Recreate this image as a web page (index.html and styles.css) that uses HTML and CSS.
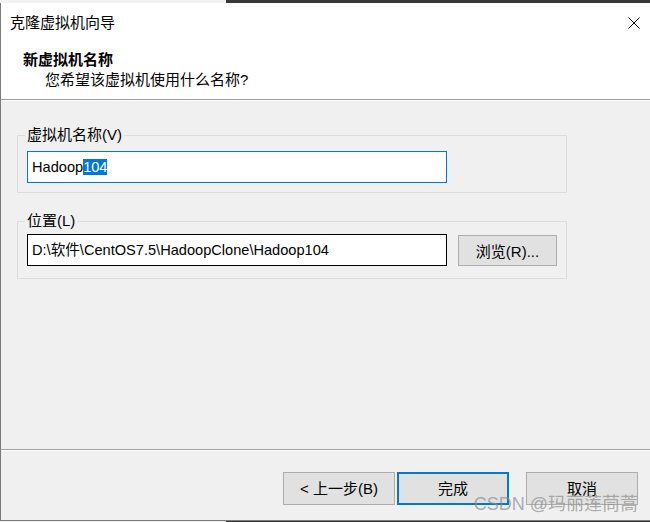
FILE: index.html
```html
<!DOCTYPE html>
<html>
<head>
    <meta charset="UTF-8">
    <title>克隆虚拟机向导</title>
    <link rel="stylesheet" href="styles.css">
</head>
<body>
<div class="strip">
    <div class="strip-light"></div>
    <div class="strip-dark"></div>
</div>

<div class="window">
    <div class="head">
        <div class="titlebar">
            <span class="title">克隆虚拟机向导</span>
            <svg class="close" width="12" height="12" viewBox="0 0 12 12">
                <path d="M0.5 0.5 L11.5 11.5 M11.5 0.5 L0.5 11.5" stroke="#000" stroke-width="1" fill="none"/>
            </svg>
        </div>
        <div class="page-title">新虚拟机名称</div>
        <div class="page-sub">您希望该虚拟机使用什么名称?</div>
    </div>

    <div class="content">
        <fieldset class="group group-name">
            <legend>虚拟机名称(V)</legend>
            <div class="field focused"><span>Hadoop</span><span class="sel">104</span></div>
        </fieldset>

        <fieldset class="group group-path">
            <legend>位置(L)</legend>
            <div class="row">
                <div class="field">D:\软件\CentOS7.5\HadoopClone\Hadoop104</div>
                <button class="btn btn-browse">浏览(R)...</button>
            </div>
        </fieldset>
    </div>

    <div class="footer">
        <button class="btn btn-nav">&lt; 上一步(B)</button>
        <button class="btn btn-nav default">完成</button>
        <button class="btn btn-nav cancel">取消</button>
        <span class="watermark">CSDN @玛丽莲茼蒿</span>
    </div>
</div>

<div class="strip strip-bottom">
    <div class="strip-light"></div>
    <div class="strip-dark"></div>
</div>
</body>
</html>
```

FILE: styles.css
```css
html, body {
    margin: 0;
    height: 100%;
}

body {
    width: 650px;
    height: 522px;
    overflow: hidden;
    background: #f0f0f0;
    color: #000000;
    font-family: "Liberation Sans", "Noto Sans CJK SC", sans-serif;
    font-size: 15px;
}

.strip {
    display: flex;
    height: 3px;
}

.strip-light {
    width: 226px;
    background: #f2f2f2;
}

.strip-dark {
    flex: 1;
    background: #383838;
}

.strip-bottom {
    height: 1px;
}

.window {
    display: flex;
    flex-flow: column;
    height: 517px;
    border-left: 1px solid #7a7a7a;
    border-bottom: 1px solid #7a7a7a;
}

/* white header */
.head {
    height: 96px;
    background: #ffffff;
    border-bottom: 1px solid #a0a0a0;
    box-shadow: 0 1px 0 #ffffff;
}

.titlebar {
    display: flex;
    justify-content: space-between;
    align-items: center;
    height: 40px;
    padding: 0 10px 0 9px;
    margin-bottom: 7px;
}

.title {
    line-height: 40px;
}

.close {
    display: block;
}

.page-title {
    padding-left: 22px;
    line-height: 20px;
    font-weight: bold;
}

.page-sub {
    padding-left: 44px;
    line-height: 20px;
}

/* body */
.content {
    flex: 1;
    padding: 25px 0 0 16px;
}

.group {
    width: 530px;
    margin: 0 0 18px;
    padding: 6px 9px 9px;
    border: 1px solid #dcdcdc;
}

.group legend {
    padding: 0 2px;
    margin-left: -2px;
    line-height: 20px;
}

.group-path {
    padding-top: 3px;
    padding-bottom: 12px;
}

.field {
    box-sizing: border-box;
    width: 420px;
    height: 32px;
    padding: 0 4px;
    line-height: 30px;
    font-size: 14.6px;
    background: #ffffff;
    border: 1px solid #000000;
    white-space: nowrap;
}

.field.focused {
    border-color: #0078d7;
}

.sel {
    background: #0078d7;
    color: #ffffff;
}

.row {
    display: flex;
    align-items: flex-end;
    gap: 11px;
}

.btn {
    box-sizing: border-box;
    margin: 0;
    padding: 0;
    font: inherit;
    color: #000000;
    background: #e1e1e1;
    border: 1px solid #adadad;
}

.btn-browse {
    width: 99px;
    height: 31px;
}

/* bottom buttons */
.footer {
    position: relative;
    display: flex;
    justify-content: flex-end;
    height: 71px;
    padding: 22px 12px 0 0;
    box-sizing: border-box;
    border-top: 1px solid #a0a0a0;
    box-shadow: inset 0 1px 0 #ffffff;
}

.btn-nav {
    width: 112px;
    height: 33px;
    margin-left: 2px;
    line-height: 16px;
}

.btn-nav.default {
    border: 2px solid #0078d7;
}

.btn-nav.cancel {
    margin-left: 17px;
}

.watermark {
    position: absolute;
    right: 12px;
    bottom: 8px;
    font-size: 18px;
    line-height: 16px;
    color: rgba(140, 140, 140, 0.7);
    white-space: nowrap;
}
```
